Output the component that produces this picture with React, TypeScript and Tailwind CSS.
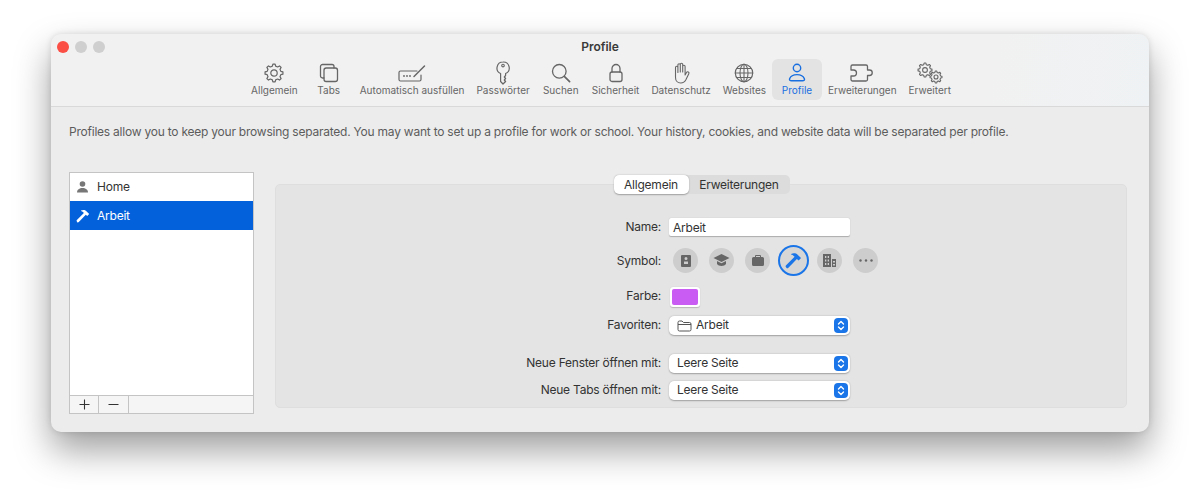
import React from "react";

const S = ({ w = 24, h = 24, vb = "0 0 24 24", children, cls = "" }: { w?: number; h?: number; vb?: string; children: React.ReactNode; cls?: string }) => (
  <svg width={w} height={h} viewBox={vb} fill="none" stroke="currentColor" strokeWidth={1.4} strokeLinecap="round" strokeLinejoin="round" className={cls}>
    {children}
  </svg>
);

const gearPath = (cx: number, cy: number, r: number) => {
  const pts: string[] = [];
  const n = 8;
  for (let i = 0; i < n; i++) {
    const a = (i / n) * Math.PI * 2;
    const d = (Math.PI * 2) / n;
    const p = (ang: number, rad: number) => `${(cx + Math.cos(ang) * rad).toFixed(2)} ${(cy + Math.sin(ang) * rad).toFixed(2)}`;
    pts.push(`${i === 0 ? "M" : "L"}${p(a - d * 0.16, r)}`, `L${p(a + d * 0.16, r)}`, `L${p(a + d * 0.3, r * 0.78)}`, `L${p(a + d * 0.7, r * 0.78)}`);
  }
  return pts.join(" ") + " Z";
};

const GearIcon = () => (
  <S w={20} h={20} vb="0 0 20 20">
    <path d={gearPath(10, 10, 9)} strokeWidth={1.2} />
    <circle cx="10" cy="10" r="3.2" strokeWidth={1.2} />
  </S>
);
const TabsIcon = () => (
  <S w={20} h={20} vb="0 0 20 20">
    <path d="M5 15H3.500A2 2 0 0 1 1.500 13V3.500A2 2 0 0 1 3.500 1.500H13A2 2 0 0 1 15 3.500V5" strokeWidth={1.3} />
    <rect x="5" y="5" width="13.500" height="13.500" rx="2.200" strokeWidth={1.3} />
  </S>
);
const AutofillIcon = () => (
  <S w={28} h={20} vb="0 0 28 20">
    <path d="M19 8H2.500A1.500 1.500 0 0 0 1 9.500V16.500A1.500 1.500 0 0 0 2.500 18H21.500A1.500 1.500 0 0 0 23 16.500V12" strokeWidth={1.2} />
    <path d="M16 13.500L26.500 3" strokeWidth={1.5} />
    <circle cx="6" cy="13" r=".9" fill="currentColor" stroke="none" />
    <circle cx="9" cy="13" r=".9" fill="currentColor" stroke="none" />
    <circle cx="12" cy="13" r=".9" fill="currentColor" stroke="none" />
  </S>
);
const KeyIcon = () => (
  <S w={16} h={24} vb="0 0 16 24">
    <path d="M8 1A6 6 0 0 0 5.600 12.500V20.500L8 23L10.600 20.500L9.300 19L10.600 17.500L9.300 16L10.600 14.500V12.500A6 6 0 0 0 8 1Z" strokeWidth={1.2} />
    <circle cx="8" cy="4.600" r="1.300" strokeWidth={1.1} />
  </S>
);
const SearchIcon = () => (
  <S w={20} h={20} vb="0 0 20 20">
    <circle cx="8.300" cy="8.300" r="6.800" strokeWidth={1.3} />
    <path d="M13.300 13.300L18.600 18.600" strokeWidth={1.7} />
  </S>
);
const LockIcon = () => (
  <S w={16} h={20} vb="0 0 16 20">
    <path d="M4 9V5.500A4 4 0 0 1 12 5.500V9" strokeWidth={1.3} />
    <rect x="2" y="9" width="12" height="9.500" rx="2" strokeWidth={1.3} />
  </S>
);
const HandIcon = () => (
  <S w={20} h={22} vb="0 0 20 22">
    <path d="M4.500 12V5.500A1.200 1.200 0 0 1 6.900 5.500V10.500M6.900 10V3A1.200 1.200 0 0 1 9.300 3V10M9.300 10V2.500A1.200 1.200 0 0 1 11.700 2.500V10M11.700 10V4.500A1.200 1.200 0 0 1 14.100 4.500V13L15.500 10.500A1.300 1.300 0 0 1 17.800 11.800L15 17.500C13.800 19.800 12 21 9.800 21C6.500 21 4.500 18.800 4.500 15.500V12" strokeWidth={1.1} />
  </S>
);
const GlobeIcon = () => (
  <S w={20} h={20} vb="0 0 20 20">
    <circle cx="10" cy="10" r="8.700" strokeWidth={1.2} />
    <ellipse cx="10" cy="10" rx="4" ry="8.700" strokeWidth={1.1} />
    <path d="M10 1.300V18.700M1.300 10H18.700M2.700 5.500H17.300M2.700 14.500H17.300" strokeWidth={1.1} />
  </S>
);
const PersonIcon = () => (
  <S w={18} h={20} vb="0 0 18 20">
    <circle cx="9" cy="5" r="3.700" strokeWidth={1.4} />
    <path d="M3.400 17.700H14.600C16 17.700 16.800 16.900 16.400 15.800C15.400 13.200 12.500 11.600 9 11.600C5.500 11.600 2.600 13.200 1.600 15.800C1.200 16.900 2 17.700 3.400 17.700Z" strokeWidth={1.4} />
  </S>
);
const PuzzleIcon = () => (
  <S w={24} h={20} vb="0 0 24 20">
    <path d="M2.500 2H16A1.500 1.500 0 0 1 17.500 3.500V7H19.500A2.700 2.700 0 0 1 19.500 12.500H17.500V16.500A1.500 1.500 0 0 1 16 18H2.500A1.500 1.500 0 0 1 1 16.500V13H3.500A3 3 0 0 0 3.500 7H1V3.500A1.500 1.500 0 0 1 2.500 2Z" strokeWidth={1.3} />
  </S>
);
const GearsIcon = () => (
  <S w={26} h={22} vb="0 0 26 22">
    <path d={gearPath(8, 8, 7)} strokeWidth={1.1} />
    <circle cx="8" cy="8" r="2.400" strokeWidth={1.1} />
    <path d={gearPath(19, 15, 6)} strokeWidth={1.1} />
    <circle cx="19" cy="15" r="2" strokeWidth={1.1} />
  </S>
);

const tools: { label: string; icon: React.ReactNode; active?: boolean }[] = [
  { label: "Allgemein", icon: <GearIcon /> },
  { label: "Tabs", icon: <TabsIcon /> },
  { label: "Automatisch ausfüllen", icon: <AutofillIcon /> },
  { label: "Passwörter", icon: <KeyIcon /> },
  { label: "Suchen", icon: <SearchIcon /> },
  { label: "Sicherheit", icon: <LockIcon /> },
  { label: "Datenschutz", icon: <HandIcon /> },
  { label: "Websites", icon: <GlobeIcon /> },
  { label: "Profile", icon: <PersonIcon />, active: true },
  { label: "Erweiterungen", icon: <PuzzleIcon /> },
  { label: "Erweitert", icon: <GearsIcon /> },
];

const Hammer = ({ size = 14 }: { size?: number }) => (
  <svg width={size} height={size} viewBox="0 0 14 14" fill="currentColor">
    <path d="M5 1.600C7 .6 9.200 1 10.400 2.200L13.200 5 11.200 7 9.800 5.700 2.800 13a1.100 1.100 0 0 1-1.700-.1L.9 12.600a1.100 1.100 0 0 1 0-1.600L7.900 4 7.200 3.300C6.600 2.700 5.900 2.200 5 2Z" />
  </svg>
);

const Chevrons = () => (
  <span className="flex h-[15px] w-[14px] items-center justify-center rounded-[4px] bg-[#1a75e8] text-white">
    <svg width="8" height="11" viewBox="0 0 8 11" fill="none" stroke="currentColor" strokeWidth="1.4" strokeLinecap="round" strokeLinejoin="round">
      <path d="M1.500 4L4 1.500L6.500 4M1.500 7L4 9.500L6.500 7" />
    </svg>
  </span>
);

const Select = ({ text, folder }: { text: string; folder?: boolean }) => (
  <div className="flex h-[19px] w-[181px] items-center rounded-[5px] bg-white pl-2 pr-[2px] shadow-[0_0.5px_1.5px_rgba(0,0,0,0.3)]">
    {folder && (
      <svg width="15" height="12" viewBox="0 0 15 12" fill="none" stroke="#555" strokeWidth="1" className="mr-[4px]">
        <path d="M1 2.500A1.500 1.500 0 0 1 2.500 1H5L6.500 2.500H12.500A1.500 1.500 0 0 1 14 4V9.500A1.500 1.500 0 0 1 12.500 11H2.500A1.500 1.500 0 0 1 1 9.500ZM1 4.500H14" />
      </svg>
    )}
    <span className="flex-1 pb-[1px] text-[#333]">{text}</span>
    <Chevrons />
  </div>
);

const Label = ({ children, lift }: { children: React.ReactNode; lift?: boolean }) => (
  <span className={`mr-2 w-[385px] text-right text-[#333] ${lift ? "pb-[1px]" : ""}`}>{children}</span>
);

const Circle = ({ children }: { children: React.ReactNode }) => (
  <span className="flex h-[25px] w-[25px] items-center justify-center rounded-full bg-[#cdcdcd] text-[#666]">{children}</span>
);

export default function App() {
  return (
    <div
      className="h-[499px] w-[1200px] overflow-hidden bg-white pl-[51px] pt-[34px] text-[12px] tracking-[-0.019em]"
      style={{ fontFamily: 'Inter, "Liberation Sans", sans-serif' }}
    >
      <div className="flex h-[398px] w-[1098px] flex-col overflow-hidden rounded-[10px] bg-[#ececec] shadow-[0_18px_36px_rgba(0,0,0,0.38),0_0_6px_rgba(0,0,0,0.12)]">
        <header className="h-[73px] border-b border-[#d9d9d9] bg-[linear-gradient(100deg,#f1f1f1_85%,#eff2f4)]">
          <div className="grid h-[25px] grid-cols-[1fr_auto_1fr] items-center pt-[1px]">
            <div className="flex gap-[6px] pl-[6px]">
              <span className="h-[12px] w-[12px] rounded-full bg-[#fb4e45]" />
              <span className="h-[12px] w-[12px] rounded-full bg-[#cfcfcf]" />
              <span className="h-[12px] w-[12px] rounded-full bg-[#cfcfcf]" />
            </div>
            <span className="text-[12px] font-semibold tracking-normal text-[#3a3a3a]">Profile</span>
            <div />
          </div>
          <nav className="flex justify-center pl-[2px]">
            {tools.map((t) => (
              <div
                key={t.label}
                className={`flex h-[41px] min-w-[50px] flex-col items-center rounded-[6px] px-[6px] ${t.active ? "bg-[#e3e3e3] text-[#1a6fe0]" : "text-[#666]"}`}
              >
                <span className="flex h-[25px] items-center justify-center pt-[2px]">{t.icon}</span>
                <span className="whitespace-nowrap text-[10px] leading-[12px] tracking-normal">{t.label}</span>
              </div>
            ))}
          </nav>
        </header>

        <main className="flex flex-1 flex-col pl-[18px] pr-[22px]">
          <p className="mt-[17px] h-[16px] whitespace-nowrap leading-[16px] text-[#5c5c5c]">
            Profiles allow you to keep your browsing separated. You may want to set up a profile for work or school. Your history, cookies, and website data will be separated per profile.
          </p>
          <div className="mt-[32px] flex">
            <aside className="flex h-[242px] w-[185px] flex-col border border-[#c4c4c4] bg-white text-[#333]">
              <div className="flex h-[28px] items-center gap-[8px] px-[6px]">
                <svg width="13" height="12" viewBox="0 0 12 12" fill="#777">
                  <circle cx="6" cy="3" r="2.800" />
                  <path d="M.5 11.500C.5 8.500 3 7 6 7s5.500 1.500 5.500 4.500Z" />
                </svg>
                <span>Home</span>
              </div>
              <div className="flex h-[29px] items-center gap-[7px] bg-[#0461dc] px-[6px] pt-[1px] text-white">
                <Hammer size={14} />
                <span>Arbeit</span>
              </div>
              <div className="flex-1" />
              <div className="flex h-[18px] border-t border-[#c4c4c4] bg-[#f5f5f5] text-[#333]">
                <span className="flex w-[29px] items-center justify-center border-r border-[#c4c4c4]">
                  <svg width="11" height="11" viewBox="0 0 11 11" stroke="#333" strokeWidth="1.1"><path d="M.5 5.500H10.500M5.500 .5V10.500" /></svg>
                </span>
                <span className="flex w-[30px] items-center justify-center border-r border-[#c4c4c4]">
                  <svg width="11" height="3" viewBox="0 0 11 3" stroke="#333" strokeWidth="1.1"><path d="M.5 1.500H10.500" /></svg>
                </span>
              </div>
            </aside>

            <section className="ml-[21px] mt-[12px] flex h-[224px] w-[852px] flex-col rounded-[5px] border border-[#dedede] bg-[#e4e4e4]">
              <div className="-mt-[10px] flex h-[19px] justify-center pl-[1px] text-[#333]">
                <div className="flex h-[19px] items-center rounded-[5px] bg-[#dcdcdc]">
                  <span className="flex h-[19px] w-[75px] items-center justify-center rounded-[5px] bg-white pt-[1px] shadow-[0_0.5px_1.5px_rgba(0,0,0,0.3)]">Allgemein</span>
                  <span className="flex h-[19px] w-[101px] items-center justify-center pt-[1px]">Erweiterungen</span>
                </div>
              </div>

              <div className="mt-[24px] flex h-[18px] items-center">
                <Label>Name:</Label>
                <div className="flex h-[18px] w-[181px] items-center rounded-[2px] bg-white pl-[4px] pt-[1px] text-[#333] shadow-[0_0.5px_1px_rgba(0,0,0,0.25)]">Arbeit</div>
              </div>

              <div className="mt-[9px] flex h-[31px] items-center">
                <Label>Symbol:</Label>
                <div className="flex items-center gap-[11px] pl-[4px]">
                  <Circle>
                    <svg width="10" height="12" viewBox="0 0 10 12" fill="#666"><path fillRule="evenodd" d="M1 0H9A1 1 0 0 1 10 1V11A1 1 0 0 1 9 12H1A1 1 0 0 1 0 11V1A1 1 0 0 1 1 0ZM3 6.500V9H7V6.500ZM5 2A1.500 1.500 0 1 0 5 5A1.500 1.500 0 0 0 5 2Z" /></svg>
                  </Circle>
                  <Circle>
                    <svg width="17" height="13" viewBox="0 0 16 13" fill="#666"><path d="M8 0L16 4L8 8L0 4ZM3.500 7V10C5 12.500 11 12.500 12.500 10V7L8 9.300Z" /></svg>
                  </Circle>
                  <Circle>
                    <svg width="12" height="11" viewBox="0 0 12 11" fill="#666"><path fillRule="evenodd" d="M4 0H8A1 1 0 0 1 9 1V2H10.500A1.500 1.500 0 0 1 12 3.500V9.500A1.500 1.500 0 0 1 10.500 11H1.500A1.500 1.500 0 0 1 0 9.500V3.500A1.500 1.500 0 0 1 1.500 2H3V1A1 1 0 0 1 4 0ZM4 1V2H8V1Z" /></svg>
                  </Circle>
                  <span className="-mx-[3px] flex h-[31px] w-[31px] items-center justify-center rounded-full border-2 border-[#1a75e8] bg-[#d6d6d6] text-[#1a75e8]">
                    <Hammer size={17} />
                  </span>
                  <Circle>
                    <svg width="13" height="13" viewBox="0 0 13 13" fill="#666"><path fillRule="evenodd" d="M0 0H8V13H0ZM2 2V4H3.300V2ZM4.700 2V4H6V2ZM2 5.500V7.500H3.300V5.500ZM4.700 5.500V7.500H6V5.500ZM2 9V11H3.300V9ZM4.700 9V11H6V9ZM9 5H13V13H9ZM10 7V8.500H12V7ZM10 10V11.500H12V10Z" /></svg>
                  </Circle>
                  <Circle>
                    <svg width="14" height="3" viewBox="0 0 14 3" fill="#666"><circle cx="1.500" cy="1.500" r="1.200" /><circle cx="7" cy="1.500" r="1.200" /><circle cx="12.500" cy="1.500" r="1.200" /></svg>
                  </Circle>
                </div>
              </div>

              <div className="mt-[11px] flex h-[20px] items-center">
                <span className="mr-2 w-[385px] pb-[2px] text-right text-[#333]">Farbe:</span>
                <span className="ml-[1px] flex h-[20px] w-[30px] items-center justify-center rounded-[3px] bg-white shadow-[0_0.5px_1px_rgba(0,0,0,0.2)]">
                  <span className="h-[16px] w-[26px] rounded-[2px] bg-[#c95cf2]" />
                </span>
              </div>

              <div className="mt-[9px] flex h-[19px] items-center">
                <Label lift>Favoriten:</Label>
                <Select text="Arbeit" folder />
              </div>
              <div className="mt-[19px] flex h-[19px] items-center">
                <Label lift>Neue Fenster öffnen mit:</Label>
                <Select text="Leere Seite" />
              </div>
              <div className="mt-[8px] flex h-[19px] items-center">
                <Label lift>Neue Tabs öffnen mit:</Label>
                <Select text="Leere Seite" />
              </div>
            </section>
          </div>
        </main>
      </div>
    </div>
  );
}
